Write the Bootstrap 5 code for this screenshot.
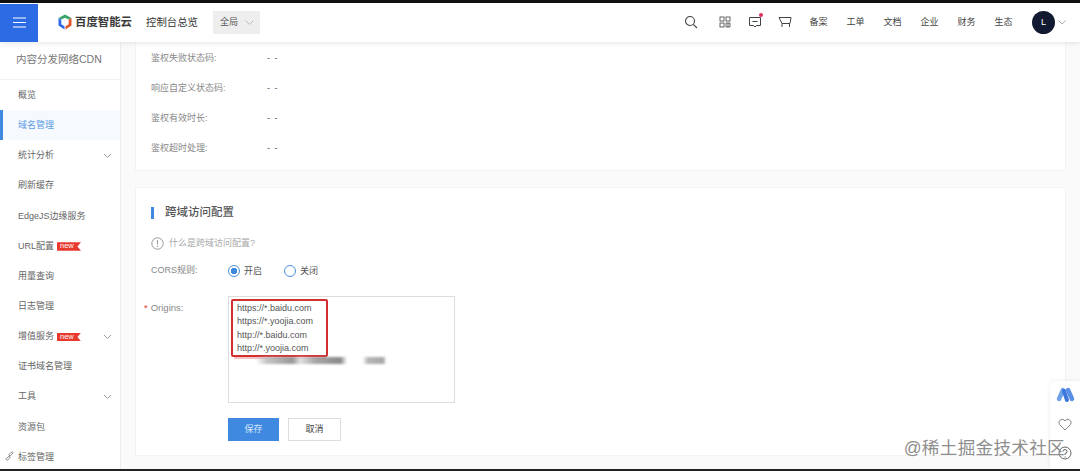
<!DOCTYPE html>
<html lang="zh">
<head>
<meta charset="utf-8">
<title>跨域访问配置</title>
<link rel="stylesheet" href="https://cdn.jsdelivr.net/npm/bootstrap@5.3.0/dist/css/bootstrap.min.css">
<style>
html,body{height:471px;overflow:hidden}
body{font-family:"Liberation Sans","Noto Sans CJK SC",sans-serif;font-size:9px;color:#666;background:#fafafa}
.frame{height:471px}
.edge-top{height:3px;background:#111}
.edge-bottom{height:2px;background:#222}
.topbar{height:39px;background:#fff;box-shadow:0 1px 5px rgba(0,0,0,.1);z-index:5;position:relative;padding-right:14px}
.burger{width:38px;height:38px;background:#2d6be4;align-self:flex-end}
.logo-mark{margin-left:19px;flex:none}
.brand{margin-left:2px;width:71px;font-size:11.4px;font-weight:700;color:#3a3a3a;white-space:nowrap}
.console{width:67px;font-size:10.4px;color:#333;white-space:nowrap}
.scope{width:47px;height:23px;background:#eee;font-size:9px;color:#555;padding:0 6px 0 7px}
.top-icons{margin-left:auto;color:#333;font-size:9px}
.ico{width:16px;height:16px;flex:none}
.gap-18{margin-right:18px}
.gap-14{margin-right:14px}
.gap-7{margin-right:7px}
.top-link{white-space:nowrap;width:37px;text-align:center;color:#444}
.avatar{width:23px;height:23px;border-radius:50%;background:#111a30;color:#fff;font-size:9px;margin-left:10px}
.avatar-chev{margin-left:3px}
.dot{position:absolute;top:-1px;right:0;width:4px;height:4px;border-radius:50%;background:#e8305a}
.side{width:121px;flex:none;background:#fff;border-right:1px solid #eee;color:#666}
.side-title{height:38px;font-size:10.5px;color:#777;padding-left:16px;border-bottom:1px solid #f2f2f2;white-space:nowrap}
.side-item{height:30.15px;padding-left:18px;padding-right:8px;font-size:9px;position:relative;white-space:nowrap;padding-top:2px}
.side-item.on{background:#f6f9fd;color:#5b9be6;border-left:3px solid #3f8ae0;padding-left:15px}
.chev{margin-left:auto;width:9px;height:6px;flex:none}
.newtag{height:8.5px;width:24px;margin-left:3px;background:#e8392e;color:#fff;font-size:7.5px;line-height:8.5px;padding-left:3px;clip-path:polygon(0 0,100% 0,85% 50%,100% 100%,0 100%)}
.link-ico{position:absolute;left:5px;top:10px}
.pane{padding:0 14px 0 14px;min-width:0;overflow:hidden}
.sheet-a{height:129px;background:#fff;border:1px solid #f3f3f3;border-top:0;padding:2px 0 0 15px}
.sheet-b{height:269px;margin-top:16px;background:#fff;border:1px solid #f3f3f3;padding:0 0 0 15px;position:relative}
.kv{height:30px;color:#888;font-size:9px}
.kv-l{width:116px;white-space:nowrap}
.kv-v{color:#555;letter-spacing:1px}
.hd{margin-top:18px;height:14px;font-size:11.5px;color:#555;font-weight:500}
.hd-bar{width:3px;height:12px;background:#3f8ae0;margin-right:11px}
.tip{margin-top:17px;color:#aaa;font-size:9px;height:14px}
.tip-ico{width:13px;height:13px;margin-right:5px}
.cors{margin-top:12px;height:16px}
.fl{width:77px;color:#888;font-size:9px;white-space:nowrap}
.rd{width:12px;height:12px;border-radius:50%;border:1px solid #4a90e2;background:#fff;margin-right:4px;flex:none}
.rd.sel{background:radial-gradient(circle,#3f8ae0 0 3px,#fff 3.5px)}
.rd-t{width:40px;color:#555;font-size:9px;padding-top:2px}
.orig{margin-top:17px}
.fl-o{width:77px;color:#888;margin-left:-7px;margin-right:7px;font-size:9.5px;padding-top:5px;white-space:nowrap}
.star{color:#e8392e;margin-right:3px}
.areabox{width:227px;height:107px;border:1px solid #ddd;padding:5px 8px;font-size:9px;line-height:13.4px;color:#555;position:relative;background:#fff}
.redbox{position:absolute;left:2px;top:2px;width:97px;height:58px;border:2.5px solid #d32f2f;border-radius:2px}
.pinkline{position:absolute;left:5px;top:59px;width:92px;height:3px;background:#f2c4c4;filter:blur(.5px)}
.smear{position:absolute;left:27px;top:60px;width:130px;height:7px;filter:blur(1.3px);background:linear-gradient(90deg,transparent 0,#bbb 8%,#888 28%,#ddd 34%,#999 45%,#777 65%,transparent 70%,transparent 82%,#aaa 86%,#999 98%,transparent 100%);opacity:.85}
.acts{margin-top:15px;margin-left:77px;gap:9px}
.act-save{width:51px;height:23px;background:#3f8ae0;color:#d5e6fa;font-size:9px;border-radius:0;padding:0;border:0}
.act-cancel{width:53px;height:23px;background:#fff;color:#444;font-size:9px;border-radius:0;padding:0;border:1px solid #ddd}
.floaty{position:absolute;right:0;top:381px;width:30px;height:88px;background:#fff;border-radius:6px 0 0 0;box-shadow:0 0 4px rgba(0,0,0,.08);z-index:6;padding-top:5px}
.fl-heart{margin-top:14px}
.fl-help{margin-top:15px}
.wm{position:absolute;right:15px;top:435px;font-size:17.6px;color:#8e8e8e;z-index:7;white-space:nowrap;letter-spacing:.3px}
</style>
</head>
<body>
<div class="frame d-flex flex-column position-relative">
  <div class="edge-top"></div>
  <header class="topbar d-flex align-items-center">
    <div class="burger d-flex align-items-center justify-content-center">
      <svg width="13" height="11" viewBox="0 0 13 11"><path d="M0 1h13M0 5.500h13M0 10h13" stroke="#fff" stroke-width="1.200"/></svg>
    </div>
    <svg class="logo-mark" width="16" height="16" viewBox="0 0 16 16"><path d="M8 .5 14.500 4 11.500 5.500 8 3.800 4.500 5.500 1.500 4z" fill="#3aa56a"/><path d="M1.500 4v7.500L7.500 15.500V12.300L4.300 10.300V5.800z" fill="#2d6be4"/><path d="M14.500 4v7.500L8.500 15.500V12.300L11.700 10.300V5.800z" fill="#e0582b"/></svg>
    <div class="brand">百度智能云</div>
    <div class="console">控制台总览</div>
    <div class="scope d-flex align-items-center justify-content-between">全局
      <svg width="9" height="5" viewBox="0 0 9 5"><path d="M.5.500 4.500 4.500 8.500.500" fill="none" stroke="#bbb"/></svg>
    </div>
    <div class="top-icons d-flex align-items-center">
      <svg class="ico gap-18" viewBox="0 0 16 16"><circle cx="7" cy="7" r="4.500" fill="none" stroke="#444" stroke-width="1.100"/><path d="M10.300 10.300 14 14" stroke="#444" stroke-width="1.100"/></svg>
      <svg class="ico gap-14" viewBox="0 0 16 16" fill="none" stroke="#555" stroke-width=".9"><rect x="3" y="3" width="4" height="4"/><rect x="9" y="3" width="4" height="4"/><rect x="3" y="9" width="4" height="4"/><path d="M9 9h4v4H9zM11 9v4"/></svg>
      <span class="position-relative d-inline-flex gap-14"><svg class="ico" viewBox="0 0 16 16" fill="none" stroke="#444" stroke-width="1"><path d="M2.500 3.500h11v8h-4l-1.500 1.500-1.500-1.500h-4zM5.500 7.500h5"/></svg><i class="dot"></i></span>
      <svg class="ico gap-7" viewBox="0 0 16 16" fill="none" stroke="#444" stroke-width="1"><path d="M2 3.500h12l-1 6H5zM5 9.500V13M12.500 9.500V13"/></svg>
      <span class="top-link">备案</span><span class="top-link">工单</span><span class="top-link">文档</span><span class="top-link">企业</span><span class="top-link">财务</span><span class="top-link">生态</span>
      <span class="avatar d-flex align-items-center justify-content-center">L</span>
      <svg class="avatar-chev" width="8" height="5" viewBox="0 0 8 5"><path d="M.5.500 4 4 7.500.500" fill="none" stroke="#aaa"/></svg>
    </div>
  </header>
  <div class="d-flex flex-grow-1 overflow-hidden">
    <nav class="side">
      <div class="side-title d-flex align-items-center">内容分发网络CDN</div>
      <div class="side-item d-flex align-items-center">概览</div>
      <div class="side-item on d-flex align-items-center">域名管理</div>
      <div class="side-item d-flex align-items-center">统计分析<svg class="chev" viewBox="0 0 9 6"><path d="M1 1l3.500 3.500L8 1" fill="none" stroke="#999"/></svg></div>
      <div class="side-item d-flex align-items-center">刷新缓存</div>
      <div class="side-item d-flex align-items-center">EdgeJS边缘服务</div>
      <div class="side-item d-flex align-items-center">URL配置<span class="newtag">new</span></div>
      <div class="side-item d-flex align-items-center">用量查询</div>
      <div class="side-item d-flex align-items-center">日志管理</div>
      <div class="side-item d-flex align-items-center">增值服务<span class="newtag">new</span><svg class="chev" viewBox="0 0 9 6"><path d="M1 1l3.500 3.500L8 1" fill="none" stroke="#999"/></svg></div>
      <div class="side-item d-flex align-items-center">证书域名管理</div>
      <div class="side-item d-flex align-items-center">工具<svg class="chev" viewBox="0 0 9 6"><path d="M1 1l3.500 3.500L8 1" fill="none" stroke="#999"/></svg></div>
      <div class="side-item d-flex align-items-center">资源包</div>
      <div class="side-item d-flex align-items-center"><svg class="link-ico" width="9" height="10" viewBox="0 0 9 10" fill="none" stroke="#777" stroke-width=".8"><path d="M4 6 8 2.200A1 1 0 0 0 6.500 1L3.500 4M5 4 1.200 7.800A1 1 0 0 0 2.700 9L5.500 6"/></svg>标签管理</div>
    </nav>
    <main class="pane flex-grow-1">
      <section class="sheet-a">
        <div class="kv d-flex align-items-center"><span class="kv-l">鉴权失败状态码:</span><span class="kv-v">- -</span></div>
        <div class="kv d-flex align-items-center"><span class="kv-l">响应自定义状态码:</span><span class="kv-v">- -</span></div>
        <div class="kv d-flex align-items-center"><span class="kv-l">鉴权有效时长:</span><span class="kv-v">- -</span></div>
        <div class="kv d-flex align-items-center"><span class="kv-l">鉴权超时处理:</span><span class="kv-v">- -</span></div>
      </section>
      <section class="sheet-b">
        <div class="hd d-flex align-items-center"><i class="hd-bar"></i>跨域访问配置</div>
        <div class="tip d-flex align-items-center">
          <svg class="tip-ico" viewBox="0 0 13 13" fill="none" stroke="#999"><circle cx="6.500" cy="6.500" r="5.700"/><path d="M6.500 3v4.500M6.500 8.800v1.200"/></svg>什么是跨域访问配置?
        </div>
        <div class="cors d-flex align-items-center">
          <span class="fl">CORS规则:</span>
          <i class="rd sel"></i><span class="rd-t">开启</span>
          <i class="rd"></i><span class="rd-t">关闭</span>
        </div>
        <div class="orig d-flex align-items-start">
          <span class="fl-o"><span class="star">*</span>Origins:</span>
          <div class="areabox">https://*.baidu.com<br>https://*.yoojia.com<br>http://*.baidu.com<br>http://*.yoojia.com
            <div class="pinkline"></div><div class="redbox"></div><div class="smear"></div>
          </div>
        </div>
        <div class="acts d-flex">
          <button class="btn act-save" type="button">保存</button>
          <button class="btn act-cancel" type="button">取消</button>
        </div>
      </section>
    </main>
  </div>
  <div class="edge-bottom"></div>
  <aside class="floaty d-flex flex-column align-items-center">
    <svg width="19" height="18" viewBox="0 0 19 18" fill="none" stroke-linecap="round"><path d="M3 13 7 4" stroke="#6ea3ea" stroke-width="4.500"/><path d="M8 5 11 14" stroke="#3f78dc" stroke-width="4"/><path d="M12 4 16 13" stroke="#5a8fe6" stroke-width="4.500"/></svg>
    <svg class="fl-heart" width="14" height="13" viewBox="0 0 14 13"><path d="M7 12 1.500 6.500A3.200 3.200 0 0 1 7 2.800 3.200 3.200 0 0 1 12.500 6.500z" fill="none" stroke="#888"/></svg>
    <svg class="fl-help" width="14" height="14" viewBox="0 0 14 14" fill="none" stroke="#666"><circle cx="7" cy="7" r="6"/><path d="M5 5.500a2 2 0 1 1 2 2v1.500M7 10.500v1"/></svg>
  </aside>
  <div class="wm">@稀土掘金技术社区</div>
</div>
</body>
</html>
